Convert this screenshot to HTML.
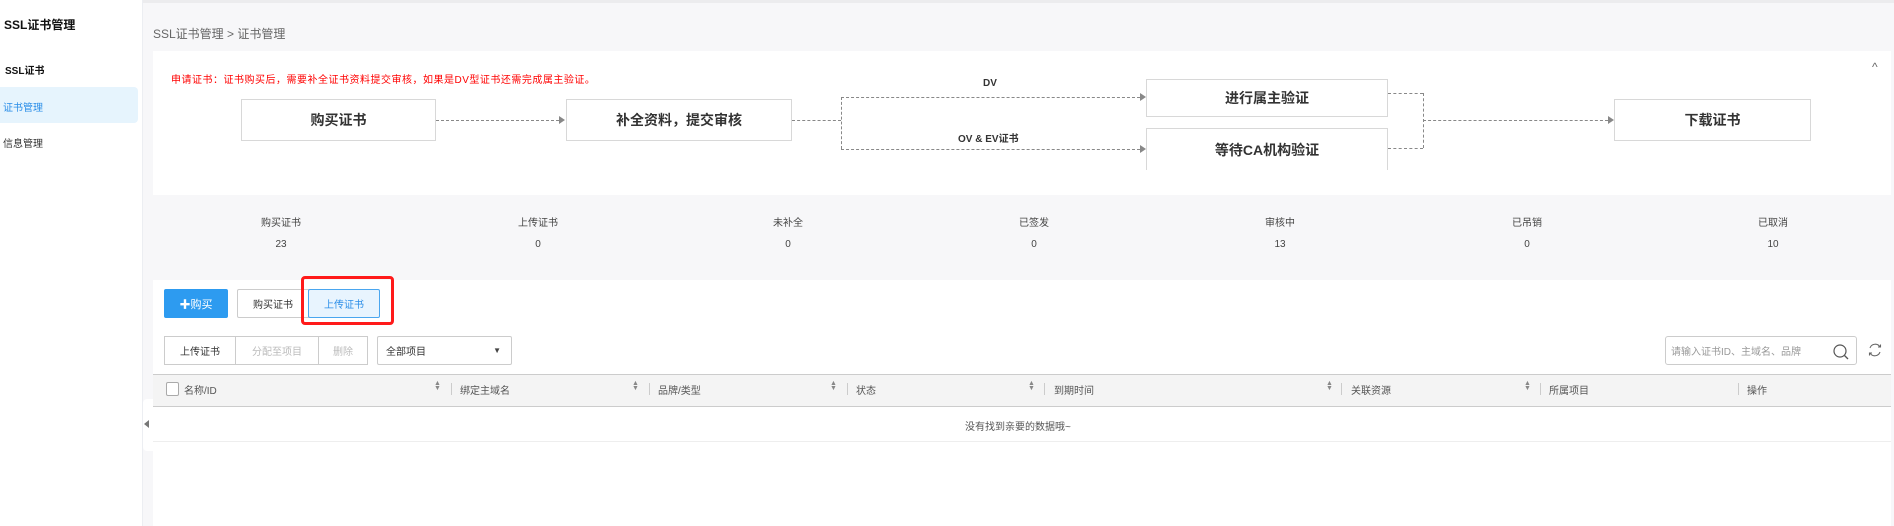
<!DOCTYPE html><html><head><meta charset="utf-8"><style>
*{margin:0;padding:0;box-sizing:border-box}
body{width:1894px;height:526px;overflow:hidden;background:#f7f7f9;font-family:"Liberation Sans","Noto Sans CJK SC",sans-serif;position:relative;color:#333}
.a{position:absolute}
.side{left:0;top:0;width:143px;height:526px;background:#fff;border-right:1px solid #eceef2}
.box{position:absolute;background:#fff;border:1px solid #d8d8d8;font-size:14px;font-weight:bold;color:#333;display:flex;align-items:center;justify-content:center}
.h{position:absolute;border-top:1px dashed #888;height:0}
.v{position:absolute;border-left:1px dashed #888;width:0}
.ar{position:absolute;width:0;height:0;border-left:6px solid #888;border-top:4px solid transparent;border-bottom:4px solid transparent}
.st{position:absolute;font-size:10px;color:#444;text-align:center;width:80px}
.btn{position:absolute;border:1px solid #ccc;background:#fff;font-size:10px;display:flex;align-items:center;justify-content:center;color:#333}
.th{position:absolute;top:382px;font-size:10px;color:#555}
.sort{position:absolute;top:381px;font-size:7px;color:#888;line-height:5px}
.sep{position:absolute;top:383px;height:12px;border-left:1px solid #ccc}
</style></head><body>
<div class="a" style="left:0;top:0;width:1894px;height:3px;background:#ececee"></div>
<div class="a side"></div>
<div class="a" style="left:4px;top:16px;font-size:12px;font-weight:bold;color:#111">SSL证书管理</div>
<div class="a" style="left:5px;top:62px;font-size:10px;font-weight:bold;color:#111">SSL证书</div>
<div class="a" style="left:0;top:87px;width:138px;height:36px;background:#e6f4fd;border-radius:0 4px 4px 0"></div>
<div class="a" style="left:3px;top:99px;font-size:10px;color:#2b8ee8">证书管理</div>
<div class="a" style="left:3px;top:135px;font-size:10px;color:#333">信息管理</div>
<div class="a" style="left:153px;top:25px;font-size:12px;color:#666">SSL证书管理 &gt; 证书管理</div>
<div class="a" style="left:153px;top:51px;width:1738px;height:144px;background:#fff"></div>
<div class="a" style="left:171px;top:71px;font-size:10px;letter-spacing:0.5px;color:#f00">申请证书：证书购买后，需要补全证书资料提交审核，如果是DV型证书还需完成属主验证。</div>
<div class="a" style="left:1872px;top:60px;font-size:12px;color:#666">^</div>
<div class="box" style="left:241px;top:99px;width:195px;height:42px">购买证书</div>
<div class="h" style="left:436px;top:120px;width:123px"></div><div class="ar" style="left:559px;top:116px"></div>
<div class="box" style="left:566px;top:99px;width:226px;height:42px">补全资料，提交审核</div>
<div class="h" style="left:792px;top:120px;width:49px"></div>
<div class="v" style="left:841px;top:97px;height:52px"></div>
<div class="h" style="left:841px;top:97px;width:299px"></div><div class="ar" style="left:1140px;top:93px"></div>
<div class="h" style="left:841px;top:149px;width:299px"></div><div class="ar" style="left:1140px;top:145px"></div>
<div class="a" style="left:983px;top:78px;font-size:10px;font-weight:bold">DV</div>
<div class="a" style="left:958px;top:130px;font-size:10px;font-weight:bold">OV &amp; EV证书</div>
<div class="box" style="left:1146px;top:79px;width:242px;height:38px">进行属主验证</div>
<div class="box" style="left:1146px;top:128px;width:242px;height:42px;border-bottom:none">等待CA机构验证</div>
<div class="h" style="left:1388px;top:93px;width:35px"></div>
<div class="h" style="left:1388px;top:148px;width:35px"></div>
<div class="v" style="left:1423px;top:93px;height:55px"></div>
<div class="h" style="left:1423px;top:120px;width:185px"></div><div class="ar" style="left:1608px;top:116px"></div>
<div class="box" style="left:1614px;top:99px;width:197px;height:42px">下载证书</div>
<div class="st" style="left:241px;top:214px">购买证书</div><div class="st" style="left:241px;top:239px">23</div>
<div class="st" style="left:498px;top:214px">上传证书</div><div class="st" style="left:498px;top:239px">0</div>
<div class="st" style="left:748px;top:214px">未补全</div><div class="st" style="left:748px;top:239px">0</div>
<div class="st" style="left:994px;top:214px">已签发</div><div class="st" style="left:994px;top:239px">0</div>
<div class="st" style="left:1240px;top:214px">审核中</div><div class="st" style="left:1240px;top:239px">13</div>
<div class="st" style="left:1487px;top:214px">已吊销</div><div class="st" style="left:1487px;top:239px">0</div>
<div class="st" style="left:1733px;top:214px">已取消</div><div class="st" style="left:1733px;top:239px">10</div>
<div class="a" style="left:153px;top:280px;width:1738px;height:246px;background:#fff"></div>
<div class="a" style="left:143px;top:399px;width:10px;height:52px;background:#fff;border-radius:4px 0 0 4px"></div>
<div class="a" style="left:144px;top:420px;border-right:5px solid #777;border-top:4px solid transparent;border-bottom:4px solid transparent"></div>
<div class="btn" style="left:164px;top:289px;width:64px;height:29px;background:#2d9bf0;border-color:#2d9bf0;color:#fff;border-radius:2px;font-size:11px">✚购买</div>
<div class="btn" style="left:237px;top:289px;width:72px;height:29px;border-radius:2px 0 0 2px">购买证书</div>
<div class="btn" style="left:308px;top:289px;width:72px;height:29px;background:#e8f4fe;border-color:#4aa6ef;color:#2b8ee8;border-radius:2px">上传证书</div>
<div class="a" style="left:301px;top:276px;width:93px;height:49px;border:3px solid #ff1a1a;border-radius:4px"></div>
<div class="btn" style="left:164px;top:336px;width:72px;height:29px">上传证书</div>
<div class="btn" style="left:235px;top:336px;width:84px;height:29px;color:#bbb">分配至项目</div>
<div class="btn" style="left:318px;top:336px;width:50px;height:29px;color:#bbb">删除</div>
<div class="btn" style="left:377px;top:336px;width:135px;height:29px;justify-content:flex-start;padding-left:8px;border-radius:2px">全部项目<span style="position:absolute;right:10px;font-size:8px;color:#444">▼</span></div>
<div class="btn" style="left:1665px;top:336px;width:192px;height:29px;justify-content:flex-start;padding-left:5px;color:#999;border-radius:3px">请输入证书ID、主域名、品牌
<svg style="position:absolute;right:6px;top:6px" width="18" height="18" viewBox="0 0 18 18"><circle cx="8" cy="8" r="6" fill="none" stroke="#555" stroke-width="1.2"/><path d="M12.5 12.5L16 16" stroke="#555" stroke-width="1.3"/></svg></div>
<svg class="a" style="left:1867px;top:342px" width="16" height="16" viewBox="0 0 16 16"><path d="M3 6A5.5 5.5 0 0 1 13 5M13 10A5.5 5.5 0 0 1 3 11" fill="none" stroke="#666" stroke-width="1.1"/><path d="M11 5h2.5V2.5M5 11H2.5v2.5" fill="none" stroke="#666" stroke-width="1.1"/></svg>
<div class="a" style="left:153px;top:374px;width:1738px;height:33px;background:#f4f4f4;border-top:1px solid #ccc;border-bottom:1px solid #ccc"></div>
<div class="a" style="left:166px;top:382px;width:13px;height:14px;border:1px solid #aaa;border-radius:2px;background:#fff"></div>
<div class="th" style="left:184px">名称/ID</div>
<div class="th" style="left:460px">绑定主域名</div>
<div class="th" style="left:658px">品牌/类型</div>
<div class="th" style="left:856px">状态</div>
<div class="th" style="left:1054px">到期时间</div>
<div class="th" style="left:1351px">关联资源</div>
<div class="th" style="left:1549px">所属项目</div>
<div class="th" style="left:1747px">操作</div>
<div class="sort" style="left:434px">▲<br>▼</div><div class="sep" style="left:451px"></div>
<div class="sort" style="left:632px">▲<br>▼</div><div class="sep" style="left:649px"></div>
<div class="sort" style="left:830px">▲<br>▼</div><div class="sep" style="left:847px"></div>
<div class="sort" style="left:1028px">▲<br>▼</div><div class="sep" style="left:1044px"></div>
<div class="sort" style="left:1326px">▲<br>▼</div><div class="sep" style="left:1341px"></div>
<div class="sort" style="left:1524px">▲<br>▼</div><div class="sep" style="left:1540px"></div>
<div class="sep" style="left:1738px"></div>
<div class="a" style="left:965px;top:418px;font-size:10px;color:#555">没有找到亲要的数据哦~</div>
<div class="a" style="left:153px;top:441px;width:1738px;height:1px;background:#eee"></div>
</body></html>
